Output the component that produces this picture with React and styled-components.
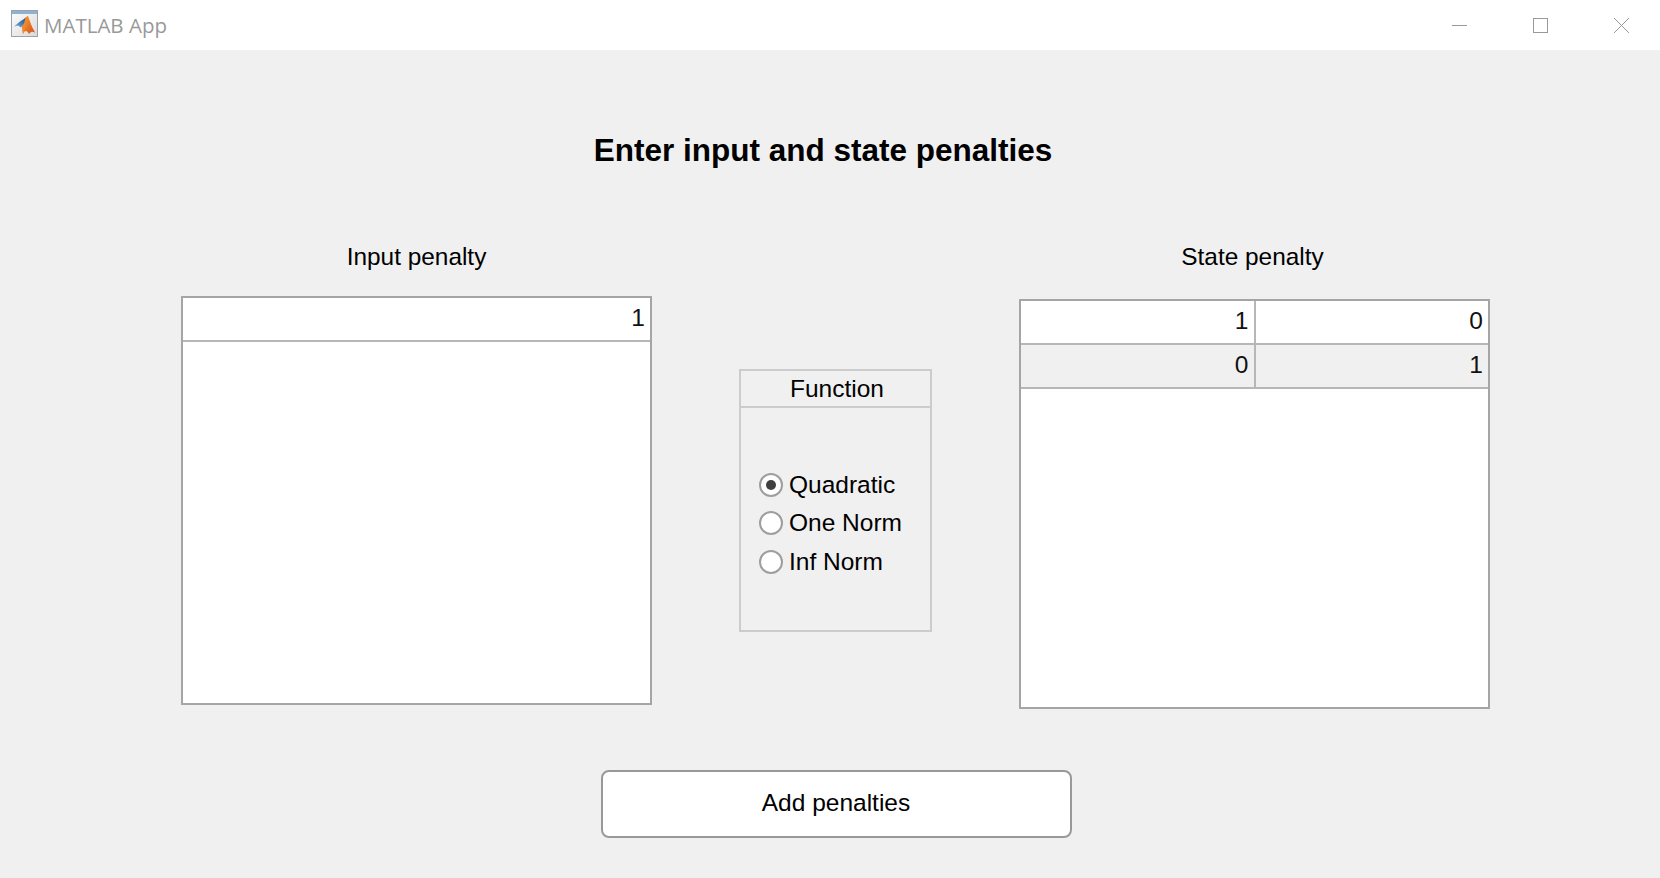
import React from 'react'
import styled, { createGlobalStyle } from 'styled-components'

const GlobalStyle = createGlobalStyle`
  html, body {
    margin: 0;
    padding: 0;
    background: rgb(240, 240, 240);
  }
  body {
    font-family: "Liberation Sans", Arial, sans-serif;
    color: rgb(0, 0, 0);
  }
`

const Page = styled.div`
  width: 1660px;
  height: 878px;
  display: flex;
  flex-direction: column;
  overflow: hidden;
`

const TitleBar = styled.header`
  height: 50px;
  flex: none;
  display: flex;
  align-items: center;
  background: rgb(255, 255, 255);
  padding-left: 11px;
`

const AppIcon = styled.svg`
  width: 27px;
  height: 27px;
  flex: none;
  margin-bottom: 3px;
`

const AppName = styled.span`
  margin-left: 6px;
  font: 20.5px / 50px "Open Sans", sans-serif;
  color: rgb(153, 153, 153);
`

const WindowButtons = styled.div`
  margin-left: auto;
  margin-right: -2px;
  display: flex;
`

const WindowButton = styled.span`
  width: 81px;
  height: 50px;
  display: flex;
  align-items: center;
  justify-content: center;
`

const Content = styled.main`
  flex: 1;
  display: flex;
  flex-direction: column;
`

const Heading = styled.h1`
  margin: 80px 14px 0 0;
  height: 40px;
  font: bold 31.5px / 40px "Liberation Sans", sans-serif;
  text-align: center;
`

const Panels = styled.div`
  margin-top: 70px;
  padding-left: 181px;
  display: grid;
  grid-template-columns: 471px 193px 471px;
  column-gap: 87px;
  align-items: start;
`

const TableColumn = styled.section`
  display: flex;
  flex-direction: column;
`

const TableLabel = styled.div`
  height: 32px;
  font: 24.4px / 34px "Liberation Sans", sans-serif;
  text-align: center;
  padding-right: ${({ $shift }) => $shift || 0}px;
`

const Table = styled.div`
  margin-top: ${({ $gap }) => $gap}px;
  height: ${({ $height }) => $height}px;
  box-sizing: border-box;
  border: 2px solid rgb(165, 165, 165);
  background: rgb(255, 255, 255);
`

const Row = styled.div`
  height: 44px;
  box-sizing: border-box;
  display: flex;
  border-bottom: 2px solid rgb(183, 183, 183);
  background: ${({ $striped }) => ($striped ? 'rgb(240, 240, 240)' : 'rgb(255, 255, 255)')};
`

const Cell = styled.div`
  flex: 1;
  padding-right: 5px;
  font: 24.5px / 39px "Liberation Sans", sans-serif;
  color: rgb(17, 17, 17);
  text-align: right;

  & + & {
    border-left: 2px solid rgb(183, 183, 183);
  }
`

const FunctionGroup = styled.fieldset`
  margin: 129px 0 0;
  padding: 0;
  height: 263px;
  box-sizing: border-box;
  border: 2px solid rgb(204, 204, 204);
  display: flex;
  flex-direction: column;
`

const GroupTitle = styled.div`
  height: 35px;
  flex: none;
  border-bottom: 2px solid rgb(204, 204, 204);
  padding-left: 3px;
  font: 24.5px / 36px "Liberation Sans", sans-serif;
  text-align: center;
`

const RadioList = styled.div`
  padding: 65px 0 0 18px;
  display: flex;
  flex-direction: column;
  gap: 14.4px;
`

const RadioOption = styled.label`
  height: 24px;
  display: flex;
  align-items: center;
  gap: 6px;
  font: 24.5px / 24px "Liberation Sans", sans-serif;
`

const RadioMark = styled.span`
  width: 24px;
  height: 24px;
  box-sizing: border-box;
  border: 2px solid rgb(158, 158, 158);
  border-radius: 50%;
  background: rgb(255, 255, 255);
  display: flex;
  align-items: center;
  justify-content: center;

  &::after {
    content: '';
    display: ${({ $checked }) => ($checked ? 'block' : 'none')};
    width: 10px;
    height: 10px;
    border-radius: 50%;
    background: rgb(64, 64, 64);
  }
`

const AddButton = styled.button`
  margin: 61px 0 0 601px;
  width: 471px;
  height: 68px;
  box-sizing: border-box;
  border: 2px solid rgb(153, 153, 153);
  border-radius: 8px;
  background: rgb(255, 255, 255);
  font: 24.5px / 1 "Liberation Sans", sans-serif;
  color: rgb(0, 0, 0);
  padding: 0 1px 2px 0;
`

const MatlabIcon = () => (
  <AppIcon viewBox="0 0 27 27">
    <defs>
      <linearGradient id="frame" x1="0" y1="0" x2="1" y2="1">
        <stop offset="0" stopColor="#fdfdfd" />
        <stop offset="1" stopColor="#dadada" />
      </linearGradient>
      <linearGradient id="wing" x1="0" y1="1" x2="1" y2="0">
        <stop offset="0" stopColor="#7fb2e0" />
        <stop offset="1" stopColor="#1f4f93" />
      </linearGradient>
      <linearGradient id="body" x1="0" y1="0" x2="1" y2="1">
        <stop offset="0" stopColor="#f7a833" />
        <stop offset="1" stopColor="#d9471b" />
      </linearGradient>
    </defs>
    <rect x="0.5" y="0.5" width="26" height="26" fill="url(#frame)" stroke="#9aa1a8" />
    <rect x="1" y="1" width="25" height="3" fill="#8fb2d1" />
    <path d="M17 6 C19 11 21.5 19 24.5 23 C22 21.5 20.5 21 18 24 C16.5 21 14 19 12 24 L11 17 L14 8 Z" fill="url(#body)" />
    <path d="M17 6 L14 8 L11 17 L12 24 C13.5 20.5 15 16 17 6 Z" fill="#ee8a2c" />
    <path d="M3 16.5 L9 11.5 L14.5 8 L13 13.5 L10 17.5 L7 15.5 Z" fill="url(#wing)" />
  </AppIcon>
)

const MinimizeIcon = () => (
  <svg width="15" height="15" viewBox="0 0 15 15">
    <path d="M0 7.5 H15" stroke="#999" strokeWidth="1" fill="none" />
  </svg>
)

const MaximizeIcon = () => (
  <svg width="15" height="15" viewBox="0 0 15 15">
    <rect x="0.5" y="0.5" width="14" height="14" stroke="#999" strokeWidth="1" fill="none" />
  </svg>
)

const CloseIcon = () => (
  <svg width="15" height="15" viewBox="0 0 15 15">
    <path d="M0 0 L15 15 M15 0 L0 15" stroke="#999" strokeWidth="1" fill="none" />
  </svg>
)

const inputRows = [['1']]
const stateRows = [['1', '0'], ['0', '1']]
const functions = ['Quadratic', 'One Norm', 'Inf Norm']

const DataTable = ({ rows, gap, height }) => (
  <Table $gap={gap} $height={height}>
    {rows.map((cells, i) => (
      <Row key={i} $striped={i % 2 === 1}>
        {cells.map((value, j) => <Cell key={j}>{value}</Cell>)}
      </Row>
    ))}
  </Table>
)

export default function App () {
  return (
    <Page>
      <GlobalStyle />
      <TitleBar>
        <MatlabIcon />
        <AppName>MATLAB App</AppName>
        <WindowButtons>
          <WindowButton><MinimizeIcon /></WindowButton>
          <WindowButton><MaximizeIcon /></WindowButton>
          <WindowButton><CloseIcon /></WindowButton>
        </WindowButtons>
      </TitleBar>
      <Content>
        <Heading>Enter input and state penalties</Heading>
        <Panels>
          <TableColumn>
            <TableLabel>Input penalty</TableLabel>
            <DataTable rows={inputRows} gap={24} height={409} />
          </TableColumn>
          <FunctionGroup>
            <GroupTitle>Function</GroupTitle>
            <RadioList>
              {functions.map((name, i) => (
                <RadioOption key={name}>
                  <RadioMark $checked={i === 0} />
                  {name}
                </RadioOption>
              ))}
            </RadioList>
          </FunctionGroup>
          <TableColumn>
            <TableLabel $shift={4}>State penalty</TableLabel>
            <DataTable rows={stateRows} gap={27} height={410} />
          </TableColumn>
        </Panels>
        <AddButton>Add penalties</AddButton>
      </Content>
    </Page>
  )
}
